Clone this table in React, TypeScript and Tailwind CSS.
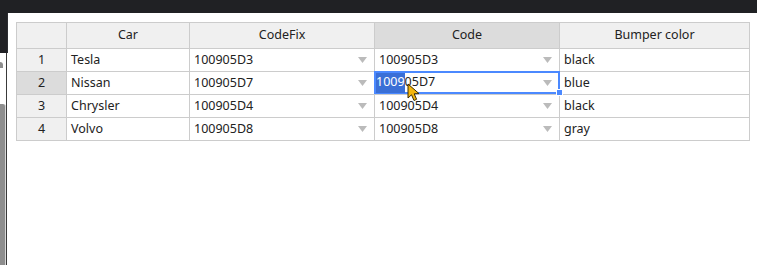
const rows = [
  { n: 1, car: "Tesla", fix: "100905D3", code: "100905D3", color: "black" },
  { n: 2, car: "Nissan", fix: "100905D7", code: "100905D7", color: "blue" },
  { n: 3, car: "Chrysler", fix: "100905D4", code: "100905D4", color: "black" },
  { n: 4, car: "Volvo", fix: "100905D8", code: "100905D8", color: "gray" },
];

function Arrow() {
  return (
    <svg width="9" height="6" viewBox="0 0 9 6" className="shrink-0">
      <path d="M0 0 H9 L4.5 6 Z" fill="#bbbbbb" />
    </svg>
  );
}

function Cursor() {
  return (
    <svg
      width="14"
      height="20"
      viewBox="0 0 14 20"
      className="pointer-events-none absolute left-[391px] top-[61px]"
    >
      <path
        d="M1 1 L1 15 L4.5 11.8 L7 17.5 L9.6 16.3 L7.2 10.8 L12 10.6 Z"
        fill="#f5b60c"
        stroke="#3a2a00"
        strokeWidth="1"
        strokeLinejoin="round"
      />
    </svg>
  );
}

export default function App() {
  const head = "h-[26px] border-r border-b border-[#cccccc] flex items-center justify-center";
  const cell = "h-[23px] border-r border-b border-[#cccccc] flex items-center bg-white pl-[4px]";

  return (
    <div className="relative flex h-[265px] w-[757px] flex-col overflow-hidden bg-white font-['Noto_Sans','Open_Sans',sans-serif] text-[12.5px] text-[#222222]">
      {/* Top bar */}
      <div className="h-[13px] shrink-0 bg-[#202124]" />

      <div className="flex flex-1">
        {/* Left strip */}
        <div className="flex w-[8px] shrink-0 flex-col">
          <div className="flex h-[40px] shrink-0">
            <div className="w-[7px] bg-[#202124]" />
            <div className="w-[1px] bg-[#2c2d31]" />
          </div>
          <div className="flex flex-1">
            <div className="flex w-[6px] flex-col bg-white">
              <div className="mt-[9px] h-[6px] w-[3px] rounded-tr-[4px] bg-[#8e8e8e]" />
              <div className="mt-[36px] flex-1 rounded-tr-[3px] border-r border-[#d8d8d8] bg-[#8e8e8e]" />
            </div>
            <div className="w-[1px] bg-[#3a3a3a]" />
            <div className="w-[1px] bg-white" />
          </div>
        </div>

        {/* Main */}
        <div className="flex-1 pl-[8px] pt-[9px]">
          <div className="relative w-[734px]">
            <div className="grid grid-cols-[50px_123px_185px_185px_190px] border-t border-l border-[#cccccc]">
              <div className={`${head} bg-[#f0f0f0]`} />
              <div className={`${head} bg-[#f0f0f0]`}>Car</div>
              <div className={`${head} bg-[#f0f0f0]`}>CodeFix</div>
              <div className={`${head} bg-[#dcdcdc]`}>Code</div>
              <div className={`${head} bg-[#f0f0f0]`}>Bumper color</div>

              {rows.map((r) => (
                <div key={r.n} className="contents">
                  <div
                    className={`h-[23px] border-r border-b border-[#cccccc] flex items-center justify-center ${
                      r.n === 2 ? "bg-[#dcdcdc]" : "bg-[#f0f0f0]"
                    }`}
                  >
                    {r.n}
                  </div>
                  <div className={cell}>{r.car}</div>
                  <div className={`${cell} justify-between pr-[7px]`}>
                    <span>{r.fix}</span>
                    <Arrow />
                  </div>
                  <div className={`${cell} justify-between pr-[7px]`}>
                    {r.n === 2 ? <span /> : <span>{r.code}</span>}
                    <Arrow />
                  </div>
                  <div className={cell}>{r.color}</div>
                </div>
              ))}
            </div>

            {/* Active editor */}
            <div className="absolute left-[358px] top-[49px] flex h-[23px] w-[186px] items-center justify-between border-2 border-[#4b89ff] bg-white pr-[6px]">
              <span className="flex h-[20px] items-center">
                <span className="flex h-full items-center bg-[#3a6fd6] text-white">1009</span>
                <span>05D7</span>
              </span>
              <Arrow />
            </div>
            <div className="absolute left-[540px] top-[67px] h-[7px] w-[7px] border border-white bg-[#4b89ff]" />
            <Cursor />
          </div>
        </div>
      </div>
    </div>
  );
}
